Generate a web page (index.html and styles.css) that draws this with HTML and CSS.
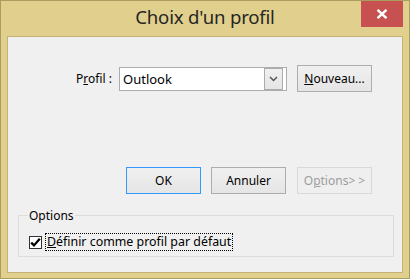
FILE: index.html
```html
<!DOCTYPE html>
<html>
<head>
<meta charset="utf-8">
<link rel="stylesheet" href="styles.css">
</head>
<body>
<div class="window">
  <div class="titlebar">
    <span class="title">Choix d'un profil</span>
    <div class="close">
      <svg width="12" height="10" viewBox="0 0 12 10"><path d="M1.5 0.8 L10.5 9.2 M10.5 0.8 L1.5 9.2" stroke="#fff" stroke-width="2.4" fill="none"/></svg>
    </div>
  </div>
  <div class="client">
    <div class="row profile-row">
      <span class="label">P<u>r</u>ofil :</span>
      <div class="combo">
        <span class="combo-text">Outlook</span>
        <span class="combo-btn">
          <svg width="9" height="6" viewBox="0 0 9 6"><path d="M1 1 L4.5 4.5 L8 1" stroke="#555" stroke-width="1.5" fill="none"/></svg>
        </span>
      </div>
      <button class="btn"><u>N</u>ouveau...</button>
    </div>
    <div class="row action-row">
      <button class="btn default">OK</button>
      <button class="btn">Annuler</button>
      <button class="btn disabled">O<u>p</u>tions&gt; &gt;</button>
    </div>
    <fieldset class="group">
      <legend>Options</legend>
      <div class="check-row">
        <span class="checkbox">
          <svg width="11" height="11" viewBox="0 0 11 11"><path d="M1.2 5.6 L4 8.4 L9.8 1.8" stroke="#000" stroke-width="2.3" fill="none"/></svg>
        </span>
        <span class="check-label"><u>D</u>éfinir comme profil par défaut</span>
      </div>
    </fieldset>
  </div>
</div>
</body>
</html>
```
FILE: styles.css
```css
html, body {
  margin: 0;
  padding: 0;
}
body {
  font-family: "Noto Sans", "Open Sans", sans-serif;
  font-size: 12px;
  color: #000;
}
.window {
  width: 410px;
  height: 279px;
  box-sizing: border-box;
  border: 1px solid #ab9c60;
  background: #e1d08d;
  display: flex;
  flex-direction: column;
}
.titlebar {
  position: relative;
  height: 35px;
  flex: none;
  display: flex;
  justify-content: center;
  align-items: center;
}
.title {
  font-size: 18.6px;
  color: #262626;
  letter-spacing: -0.2px;
  margin-left: 0;
  margin-top: -4px;
}
.close {
  position: absolute;
  top: 0;
  right: 6px;
  width: 42px;
  height: 26px;
  background: #c75050;
  display: flex;
  align-items: center;
  justify-content: center;
}
.client {
  flex: 1;
  margin: 0 6px 5px 6px;
  border: 1px solid #c4b374;
  background: #f0f0f0;
  display: flex;
  flex-direction: column;
}
.row {
  display: flex;
  align-items: center;
  justify-content: flex-end;
  padding-right: 30px;
}
.profile-row {
  margin-top: 28px;
  height: 27px;
}
.label {
  margin-right: 7px;
}
.combo {
  width: 168px;
  height: 24px;
  box-sizing: border-box;
  border: 1px solid #abadb3;
  background: #fff;
  display: flex;
  align-items: center;
  margin-right: 10px;
}
.combo-text {
  flex: 1;
  font-size: 13px;
  padding-left: 3px;
}
.combo-btn {
  width: 19px;
  height: 22px;
  box-sizing: border-box;
  border: 1px solid #acacac;
  background: linear-gradient(#f0f0f0, #e5e5e5);
  margin-right: 3px;
  display: flex;
  align-items: center;
  justify-content: center;
}
.btn {
  width: 75px;
  height: 27px;
  box-sizing: border-box;
  border: 1px solid #adadad;
  background: linear-gradient(#f0f0f0, #e5e5e5);
  font-family: inherit;
  font-size: 12px;
  color: #000;
  padding: 0;
  margin: 0;
}
.btn.default {
  border-color: #3399ff;
}
.btn.disabled {
  border-color: #d9d9d9;
  background: #efefef;
  color: #9d9d9d;
}
.action-row {
  margin-top: 75px;
  height: 27px;
  gap: 10px;
}
.action-row .disabled {
  margin-left: 1px;
}
.group {
  margin: 14px 8px 0 10px;
  padding: 10px 10px 0 10px;
  border: 1px solid #dcdcdc;
  height: 49px;
  box-sizing: border-box;
  min-width: 0;
}
.group legend {
  padding: 0 1px;
  margin-left: -1px;
  line-height: 15px;
  font-size: 12px;
}
.check-row {
  display: flex;
  align-items: center;
}
.checkbox {
  width: 13px;
  height: 13px;
  box-sizing: border-box;
  border: 1px solid #333;
  background: #fff;
  display: flex;
  align-items: center;
  justify-content: center;
  margin-right: 3px;
}
.check-label {
  border: 1px dotted #000;
  padding: 0 1px;
  line-height: 16px;
  font-size: 12.4px;
}
```
